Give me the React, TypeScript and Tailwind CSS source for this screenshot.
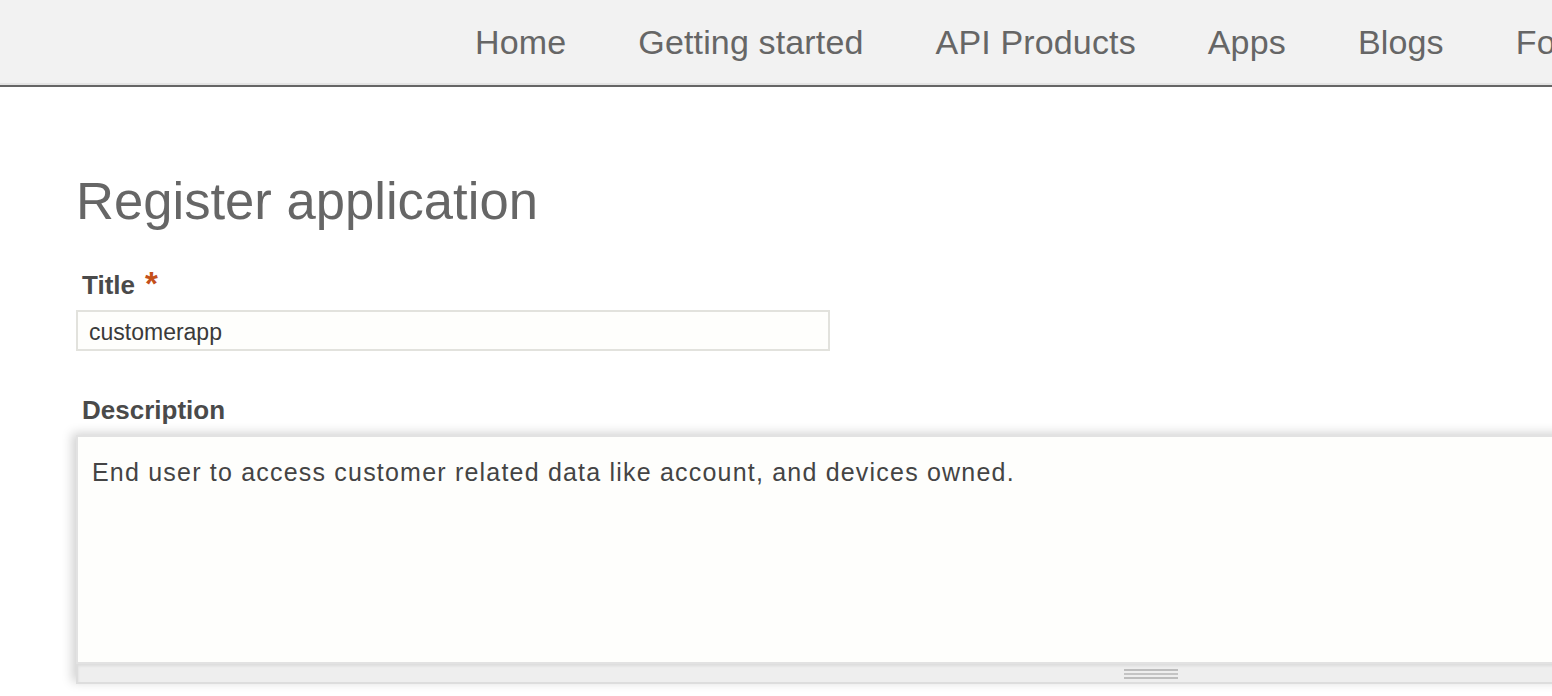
import { useState } from 'react';

const NAV_ITEMS = ['Home', 'Getting started', 'API Products', 'Apps', 'Blogs', 'Forums'];

function Header() {
  return (
    <header className="h-[87px] bg-[#f2f2f2] border-b-2 border-[#666666] shadow-[inset_0_-2px_0_#e4e4e4] overflow-hidden">
      <nav className="flex h-full items-center pl-[439px] whitespace-nowrap">
        {NAV_ITEMS.map((item) => (
          <a
            key={item}
            href="#"
            className="px-[36px] pb-[2px] text-[34px] leading-none tracking-[0.15px] text-[#666666]"
          >
            {item}
          </a>
        ))}
      </nav>
    </header>
  );
}

function Grippie() {
  return (
    <div className="flex h-[20px] justify-center border-x-2 border-b-2 border-[#dddddd] bg-[#eeeeee] shadow-[inset_0_2px_3px_rgba(0,0,0,0.08)]">
      <div className="mt-[5px] flex h-[10px] w-[54px] flex-col justify-between">
        <div className="h-[2px] bg-[#bdbdbd]" />
        <div className="h-[2px] bg-[#c4c4c4]" />
        <div className="h-[2px] bg-[#bdbdbd]" />
      </div>
    </div>
  );
}

export default function App() {
  const [title, setTitle] = useState('customerapp');
  const [description, setDescription] = useState(
    'End user to access customer related data like account, and devices owned.'
  );

  return (
    <div className="h-[696px] w-[1552px] overflow-hidden bg-white font-['Liberation_Sans',Arial,sans-serif]">
      <Header />
      <main className="pl-[76px] pt-[84px]">
        <h1 className="text-[52.6px] leading-[60px] font-normal text-[#666666]">Register application</h1>

        <div className="mt-[39px]">
          <label className="ml-[6px] flex items-start text-[26px] leading-[30px] font-bold text-[#4a4a4a]">
            Title
            <span className="ml-[10px] mt-[-1px] text-[33px] leading-[30px] text-[#c4501a]">*</span>
          </label>
          <input
            value={title}
            onChange={(e) => setTitle(e.target.value)}
            className="mt-[10px] block h-[41px] w-[754px] border-2 border-[#e2e2dd] bg-[#fefefc] px-[11px] pt-[3px] text-[23px] text-[#3a3a3a] outline-none"
          />
        </div>

        <div className="mt-[44px]">
          <label className="ml-[6px] block text-[26px] leading-[30px] font-bold text-[#4a4a4a]">
            Description
          </label>
          <div className="mt-[10px] w-[2150px] shadow-[-4px_-2px_10px_rgba(0,0,0,0.18)]">
            <textarea
              value={description}
              onChange={(e) => setDescription(e.target.value)}
              className="block h-[229px] w-full resize-none border-2 border-[#e2e2e2] bg-[#fefefc] px-[14px] pt-[19px] text-[25px] leading-[32px] tracking-[1.2px] text-[#444444] outline-none"
            />
            <Grippie />
          </div>
        </div>
      </main>
    </div>
  );
}
